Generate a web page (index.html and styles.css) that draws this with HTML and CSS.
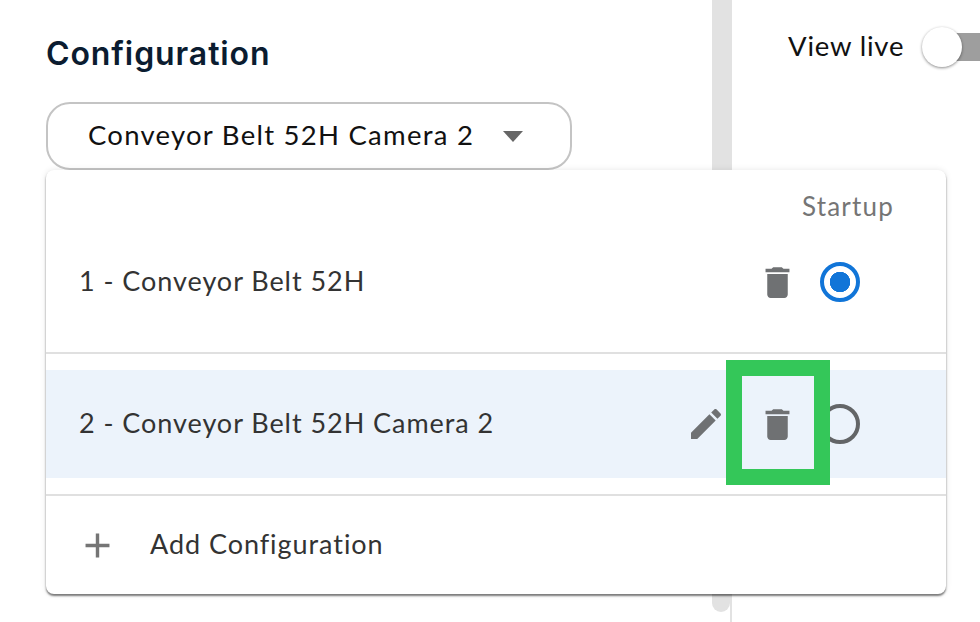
FILE: index.html
```html
<!DOCTYPE html>
<html lang="en">
<head>
    <meta charset="UTF-8">
    <title>Configuration</title>
    <link rel="stylesheet" href="styles.css">
</head>
<body>
    <div class="left-panel">
        <div class="config">
            <h2>Configuration</h2>
            <div class="select">
                <span class="select-text">Conveyor Belt 52H Camera 2</span>
                <span class="select-arrow"></span>
            </div>
            <div class="menu">
                <div class="menu-head">Startup</div>
                <div class="menu-row first-row">
                    <span class="row-name">1 - Conveyor Belt 52H</span>
                    <svg class="icon trash-icon" viewBox="0 0 24 24"><path d="M6 19c0 1.1.9 2 2 2h8c1.1 0 2-.9 2-2V7H6v12zM19 4h-3.5l-1-1h-5l-1 1H5v2h14V4z"/></svg>
                    <span class="radio checked"></span>
                </div>
                <div class="menu-row second-row">
                    <span class="row-name">2 - Conveyor Belt 52H Camera 2</span>
                    <svg class="icon edit-icon" viewBox="0 0 24 24"><path d="M3 17.25V21h3.75L17.81 9.94l-3.75-3.75L3 17.25zM20.71 7.04c.39-.39.39-1.02 0-1.41l-2.34-2.34c-.39-.39-1.02-.39-1.41 0l-1.83 1.83 3.75 3.75 1.83-1.83z"/></svg>
                    <svg class="icon trash-icon" viewBox="0 0 24 24"><path d="M6 19c0 1.1.9 2 2 2h8c1.1 0 2-.9 2-2V7H6v12zM19 4h-3.5l-1-1h-5l-1 1H5v2h14V4z"/></svg>
                    <span class="radio"></span>
                    <div class="highlight"></div>
                </div>
                <div class="menu-add">
                    <svg class="icon add-icon" viewBox="0 0 24 24"><path d="M19 13h-6v6h-2v-6H5v-2h6V5h2v6h6v2z"/></svg>
                    <span class="row-name">Add Configuration</span>
                </div>
            </div>
        </div>
        <div class="scroll-thumb"></div>
    </div>
    <div class="right-panel">
        <span class="live-label">View live</span>
        <div class="toggle">
            <div class="toggle-track"></div>
            <div class="toggle-knob"></div>
        </div>
    </div>
</body>
</html>
```

FILE: styles.css
```css
html, body {
    height: 100%;
}
body {
    font-family: 'Lato', sans-serif;
    margin: 0;
    padding: 0;
    background-color: #fff;
    color: #212121;
    display: flex;
    overflow: hidden;
}
.left-panel {
    width: 730px;
    flex-shrink: 0;
    display: flex;
    align-items: flex-start;
    border-right: 2px solid #e2e2e2;
}
.config {
    width: 666px;
    padding: 0 0 0 46px;
    position: relative;
}
.config h2 {
    margin: 0;
    padding-top: 36px;
    height: 66px;
    font-family: 'Inter', sans-serif;
    font-size: 32px;
    line-height: 36px;
    font-weight: 600;
    letter-spacing: 0.9px;
    color: #0b1c30;
}
.select {
    box-sizing: border-box;
    width: 526px;
    height: 68px;
    border: 2px solid #c4c4c4;
    border-radius: 24px;
    padding: 0 47px 0 40px;
    display: flex;
    align-items: center;
    justify-content: space-between;
    font-size: 27.5px;
    letter-spacing: 1.25px;
    color: #111;
}
.select-text {
    padding-bottom: 4px;
}
.select-arrow {
    width: 0;
    height: 0;
    border-left: 10px solid transparent;
    border-right: 10px solid transparent;
    border-top: 11px solid #666;
}
.menu {
    position: absolute;
    left: 46px;
    top: 170px;
    width: 900px;
    height: 424px;
    background: #fff;
    border-radius: 8px;
    box-shadow: 0 2px 2px rgba(0, 0, 0, 0.5), 0 0 6px rgba(0, 0, 0, 0.1);
}
.menu-head {
    height: 62px;
    padding: 0 52px 0 0;
    line-height: 72px;
    text-align: right;
    font-size: 26px;
    letter-spacing: 1.2px;
    color: #757575;
}
.menu-row {
    position: relative;
    display: flex;
    align-items: center;
    padding-left: 33px;
    font-size: 27px;
    letter-spacing: 0.95px;
    color: #333;
}
.first-row {
    height: 100px;
    margin-bottom: 38px;
}
.second-row {
    height: 108px;
    margin-bottom: 18px;
    background: #ecf3fb;
}
.first-row::after, .second-row::after {
    content: "";
    position: absolute;
    left: 0;
    right: 0;
    height: 2px;
    background: #e0e0e0;
}
.first-row::after {
    bottom: -22px;
}
.second-row::after {
    bottom: -18px;
}
.row-name {
    flex: 1;
    padding-bottom: 4px;
}
.icon {
    fill: #6f7173;
    display: block;
    flex-shrink: 0;
}
.trash-icon {
    width: 41px;
    height: 41px;
    margin-right: 22px;
}
.edit-icon {
    width: 40px;
    height: 40px;
    margin-right: 31px;
}
.radio {
    box-sizing: border-box;
    width: 40px;
    height: 40px;
    margin-right: 86px;
    border: 4px solid #636567;
    border-radius: 50%;
    flex-shrink: 0;
}
.radio.checked {
    border-color: #1175d8;
    background: radial-gradient(circle, #1175d8 0, #1175d8 10px, #fff 10.5px);
}
.highlight {
    position: absolute;
    left: 680px;
    top: -10px;
    width: 72px;
    height: 93px;
    border: 16px solid #34c759;
}
.menu-add {
    height: 98px;
    display: flex;
    align-items: center;
    padding-left: 31px;
    font-size: 27px;
    letter-spacing: 0.95px;
    color: #333;
}
.add-icon {
    width: 41px;
    height: 41px;
    margin-right: 32px;
    fill: #757575;
}
.scroll-thumb {
    width: 18px;
    height: 612px;
    background: #e2e2e2;
    border-radius: 0 0 9px 9px;
}
.right-panel {
    flex: 1;
    height: 94px;
    padding-left: 56px;
    display: flex;
    align-items: center;
}
.live-label {
    font-size: 27.5px;
    letter-spacing: 0.8px;
    color: #111;
    width: 134px;
    white-space: nowrap;
    flex-shrink: 0;
    padding-bottom: 4px;
}
.toggle {
    position: relative;
    width: 58px;
    height: 40px;
    flex-shrink: 0;
}
.toggle-track {
    height: 28px;
    margin: 6px 0 0 20px;
    background: #9e9e9e;
}
.toggle-knob {
    position: absolute;
    left: 0;
    top: 0;
    width: 40px;
    height: 40px;
    background: #fff;
    border-radius: 50%;
    box-shadow: 0 1px 3px rgba(0, 0, 0, 0.45);
}
```
